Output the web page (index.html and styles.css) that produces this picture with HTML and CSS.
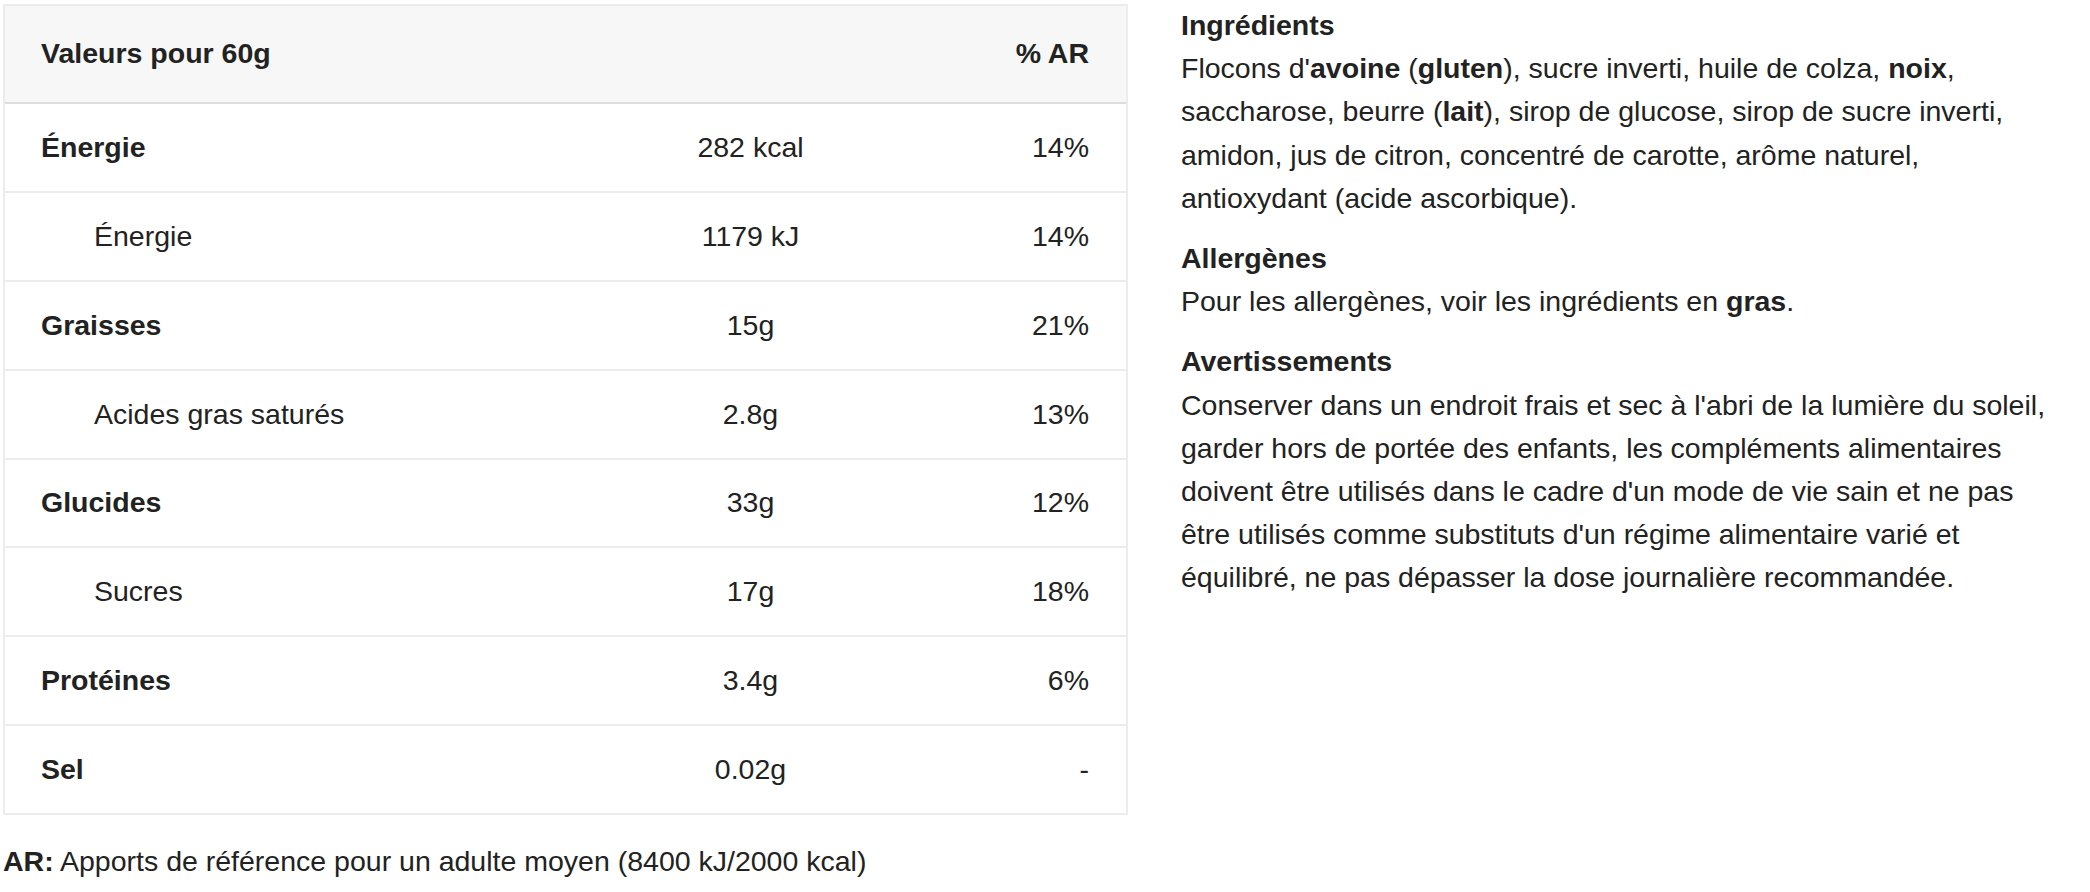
FILE: index.html
```html
<!DOCTYPE html>
<html lang="fr">
<head>
<meta charset="utf-8">
<title>Valeurs nutritionnelles</title>
<link rel="stylesheet" href="styles.css">
</head>
<body>
<div class="page">
  <div class="nutrition">
    <table class="facts">
      <colgroup>
        <col class="c-name">
        <col class="c-amount">
        <col class="c-pct">
      </colgroup>
      <thead>
        <tr>
          <th class="name">Valeurs pour 60g</th>
          <th class="amount"></th>
          <th class="pct">% AR</th>
        </tr>
      </thead>
      <tbody>
        <tr class="main"><td class="name">Énergie</td><td class="amount">282 kcal</td><td class="pct">14%</td></tr>
        <tr class="sub"><td class="name">Énergie</td><td class="amount">1179 kJ</td><td class="pct">14%</td></tr>
        <tr class="main"><td class="name">Graisses</td><td class="amount">15g</td><td class="pct">21%</td></tr>
        <tr class="sub"><td class="name">Acides gras saturés</td><td class="amount">2.8g</td><td class="pct">13%</td></tr>
        <tr class="main"><td class="name">Glucides</td><td class="amount">33g</td><td class="pct">12%</td></tr>
        <tr class="sub"><td class="name">Sucres</td><td class="amount">17g</td><td class="pct">18%</td></tr>
        <tr class="main"><td class="name">Protéines</td><td class="amount">3.4g</td><td class="pct">6%</td></tr>
        <tr class="main"><td class="name">Sel</td><td class="amount">0.02g</td><td class="pct">-</td></tr>
      </tbody>
    </table>
    <p class="footnote"><strong>AR:</strong> Apports de référence pour un adulte moyen (8400 kJ/2000 kcal)</p>
  </div>
  <div class="info">
    <section class="block">
      <h3>Ingrédients</h3>
      <p>Flocons d'<strong>avoine</strong> (<strong>gluten</strong>), sucre inverti, huile de colza, <strong>noix</strong>, saccharose, beurre (<strong>lait</strong>), sirop de glucose, sirop de sucre inverti, amidon, jus de citron, concentré de carotte, arôme naturel, antioxydant (acide ascorbique).</p>
    </section>
    <section class="block">
      <h3>Allergènes</h3>
      <p>Pour les allergènes, voir les ingrédients en <strong>gras</strong>.</p>
    </section>
    <section class="block">
      <h3>Avertissements</h3>
      <p>Conserver dans un endroit frais et sec à l'abri de la lumière du soleil, garder hors de portée des enfants, les compléments alimentaires doivent être utilisés dans le cadre d'un mode de vie sain et ne pas être utilisés comme substituts d'un régime alimentaire varié et équilibré, ne pas dépasser la dose journalière recommandée.</p>
    </section>
  </div>
</div>
</body>
</html>
```

FILE: styles.css
```css
html, body {
  margin: 0;
  padding: 0;
  background: #ffffff;
}

body {
  font-family: "Liberation Sans", Arial, Helvetica, sans-serif;
  font-size: 28.5px;
  line-height: 43.2px;
  color: #222222;
}

.page {
  display: flex;
  align-items: flex-start;
  gap: 53px;
  padding: 4px 0 0 3px;
}

.nutrition {
  flex: none;
  width: 1125px;
}

.facts {
  width: 1125px;
  table-layout: fixed;
  border-collapse: separate;
  border-spacing: 0;
  border: 2px solid #ececec;
  box-sizing: border-box;
}

.c-name { width: 570px; }
.c-amount { width: 351px; }
.c-pct { width: 200px; }

.facts th,
.facts td {
  padding: 21.85px 0;
  line-height: 43.2px;
  border-bottom: 2px solid #ececec;
  font-weight: normal;
  white-space: nowrap;
}

.facts thead th {
  background: #f7f7f7;
  font-weight: bold;
  padding-top: 26.4px;
  padding-bottom: 26.4px;
  border-bottom: 2px solid #dddddd;
}

.facts tbody tr:last-child td {
  border-bottom: none;
}

.facts .name {
  text-align: left;
  padding-left: 36px;
}

.facts .amount {
  text-align: center;
}

.facts .pct {
  text-align: right;
  padding-right: 37px;
}

.facts tr.main .name {
  font-weight: bold;
}

.facts tr.sub .name {
  padding-left: 89px;
}

.footnote {
  margin: 25px 0 0 0;
}

.info {
  flex: none;
  width: 881px;
}

.block h3 {
  margin: 0;
  font-size: 28.5px;
  line-height: 43.2px;
  font-weight: bold;
}

.block p {
  margin: 0;
}

.block + .block {
  margin-top: 17px;
}
```
